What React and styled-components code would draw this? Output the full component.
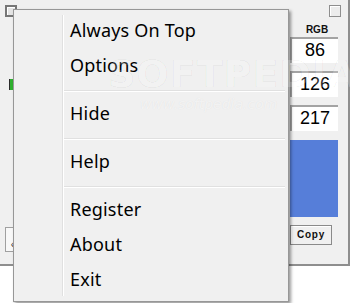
import React from 'react';
import styled, { createGlobalStyle } from 'styled-components';

const Global = createGlobalStyle`
  html, body { margin: 0; padding: 0; background: #ffffff; }
  body { width: 350px; height: 303px; overflow: hidden; font-family: "Liberation Sans", Arial, sans-serif; }
`;

const Stage = styled.div`
  position: relative;
  width: 350px;
  height: 303px;
  background: #ffffff;
  overflow: hidden;
`;

const Window = styled.div`
  box-sizing: border-box;
  width: 350px;
  height: 266px;
  background: #f0f0f0;
  border-right: 2px solid #8e8e8e;
  border-bottom: 2px solid #8e8e8e;
  display: flex;
  flex-direction: column;
`;

const Header = styled.div`
  display: flex;
  justify-content: space-between;
  padding: 5px 7px 0 5px;
`;

const CheckBox = styled.div`
  box-sizing: border-box;
  width: 12px;
  height: 12px;
  background: ${p => (p.$focused ? '#e4e4e4' : '#ececec')};
  border: ${p => (p.$focused ? '2px solid #767676' : '1px solid #8e8e8e')};
  box-shadow: inset 1px 1px 0 #ffffff;
`;

const Body = styled.div`
  flex: 1;
  display: flex;
`;

const LeftPanel = styled.div`
  width: 9px;
  margin-left: 5px;
  display: flex;
  flex-direction: column;
`;

const Thumb = styled.div`
  width: 4px;
  height: 11px;
  margin: 62px 0 0 4px;
  background: #2fb02f;
  border-left: 1px solid #2b2b2b;
`;

const NavButton = styled.div`
  box-sizing: border-box;
  width: 10px;
  height: 25px;
  margin-top: 137px;
  border: 1px solid #a0a0a0;
  background: #f8f8f8;
  font-size: 10px;
  line-height: 34px;
  text-align: right;
  color: #333;
`;

const Spacer = styled.div`
  flex: 1;
`;

const RightColumn = styled.div`
  width: 48px;
  margin-right: 10px;
  display: flex;
  flex-direction: column;
`;

const Label = styled.div`
  margin-top: 8px;
  height: 9px;
  line-height: 9px;
  font-size: 10px;
  font-weight: bold;
  padding-left: 6px;
  text-align: center;
  color: #111;
`;

const Field = styled.div`
  box-sizing: border-box;
  height: 26px;
  margin-top: ${p => p.$gap}px;
  background: #ffffff;
  border-top: 2px solid #a3a3a3;
  border-left: 2px solid #a3a3a3;
  font-size: 18px;
  line-height: 23px;
  text-align: center;
  color: #000;
`;

const Swatch = styled.div`
  height: 77px;
  margin-top: 9px;
  background: #567ed9;
`;

const CopyButton = styled.div`
  box-sizing: border-box;
  width: 42px;
  height: 20px;
  margin-top: 8px;
  background: #f0f0f0;
  border: 1px solid #8a8a8a;
  box-shadow: inset 1px 1px 0 #ffffff;
  font-size: 10px;
  font-weight: bold;
  letter-spacing: 0.8px;
  line-height: 18px;
  text-align: center;
  color: #111;
`;

const Menu = styled.div`
  position: absolute;
  left: 13px;
  top: 9px;
  width: 276px;
  height: 293px;
  box-sizing: border-box;
  border: 1px solid #979797;
  background: #f0f0f0;
  box-shadow: 2px 2px 3px rgba(0, 0, 0, 0.4);
  display: flex;
  padding: 3px 3px 4px 0;
`;

const Gutter = styled.div`
  width: 48px;
  margin: 2px 0 1px;
  border-right: 1px solid #e0e0e0;
  box-shadow: 1px 0 0 #ffffff;
`;

const MenuList = styled.div`
  flex: 1;
  display: flex;
  flex-direction: column;
  padding-left: 1px;
`;

const Item = styled.div`
  height: 35px;
  line-height: 35px;
  padding-left: 6px;
  font-family: "Noto Sans", "Open Sans", sans-serif;
  font-size: 18px;
  letter-spacing: 0.2px;
  color: #000;
  white-space: nowrap;
`;

const Separator = styled.div`
  height: 13px;
  position: relative;
  &::after {
    content: '';
    position: absolute;
    left: 0;
    right: 0;
    top: 7px;
    height: 1px;
    background: #e0e0e0;
    box-shadow: 0 1px 0 #ffffff;
  }
`;

const Watermark = styled.div`
  position: absolute;
  left: 108px;
  top: 52px;
  font-family: "DejaVu Sans", sans-serif;
  font-size: 38px;
  font-weight: bold;
  letter-spacing: 1px;
  color: rgba(255, 255, 255, 0.2);
  -webkit-text-stroke: 1px rgba(0, 0, 0, 0.045);
  pointer-events: none;
`;

const WatermarkUrl = styled.div`
  position: absolute;
  left: 140px;
  top: 96px;
  font-family: "DejaVu Sans", sans-serif;
  font-size: 14px;
  font-style: italic;
  color: rgba(255, 255, 255, 0.6);
  text-shadow: 0 0 1px rgba(0, 0, 0, 0.08);
  pointer-events: none;
`;

const groups = [
  ['Always On Top', 'Options'],
  ['Hide'],
  ['Help'],
  ['Register', 'About', 'Exit'],
];

export default function App() {
  return (
    <Stage>
      <Global />
      <Window>
        <Header>
          <CheckBox $focused />
          <CheckBox />
        </Header>
        <Body>
          <LeftPanel>
            <Thumb />
            <NavButton>‹</NavButton>
          </LeftPanel>
          <Spacer />
          <RightColumn>
            <Label>RGB</Label>
            <Field $gap={3}>86</Field>
            <Field $gap={8}>126</Field>
            <Field $gap={8}>217</Field>
            <Swatch />
            <CopyButton>Copy</CopyButton>
          </RightColumn>
        </Body>
      </Window>
      <Menu>
        <Gutter />
        <MenuList>
          {groups.map((g, gi) => (
            <React.Fragment key={gi}>
              {gi > 0 && <Separator />}
              {g.map(label => (
                <Item key={label}>{label}</Item>
              ))}
            </React.Fragment>
          ))}
        </MenuList>
      </Menu>
      <Watermark>SOFTPEDIA</Watermark>
      <WatermarkUrl>www.softpedia.com</WatermarkUrl>
    </Stage>
  );
}
